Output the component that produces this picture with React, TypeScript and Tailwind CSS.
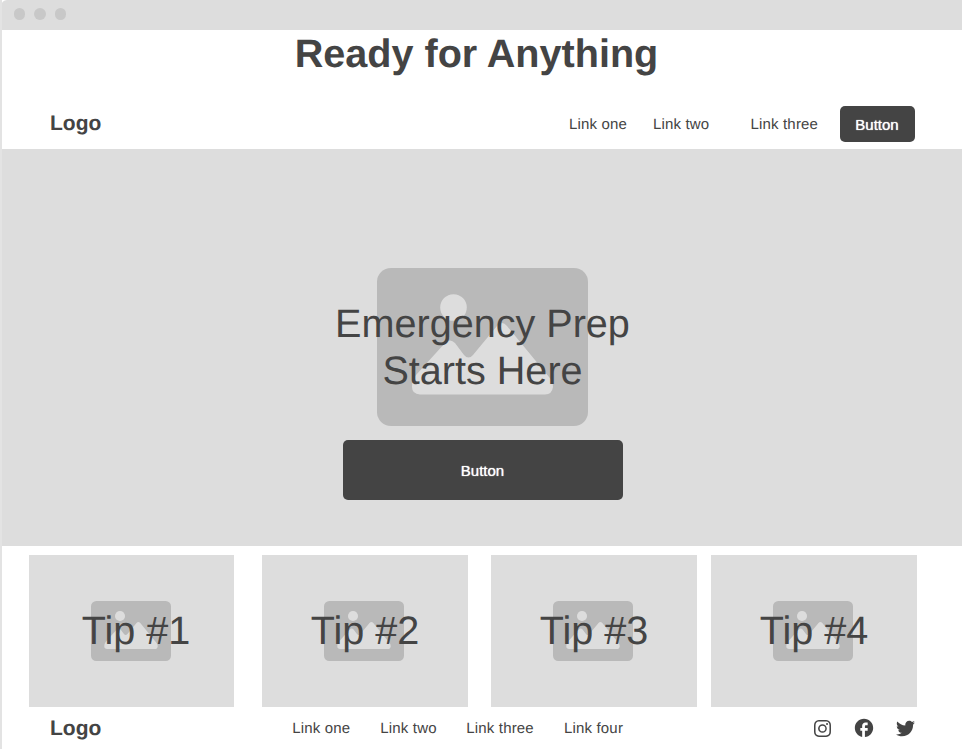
import React from "react";
import { BsInstagram } from "react-icons/bs";
import { FaTwitter } from "react-icons/fa";
import { MdFacebook } from "react-icons/md";

function Placeholder({ className }: { className: string }) {
  return (
    <svg viewBox="0 0 211 158" preserveAspectRatio="none" className={className}>
      <rect width="211" height="158" rx="14" fill="#b9b9b9" />
      <circle cx="76.5" cy="39.5" r="13.3" fill="#ddd" />
      <path
        d="M35 119Q35 112 39 107L68 75Q73 70 78 75L87 87Q91.500 92 96 87L120 58Q125 52 130 58L172 109Q176 113 176 119Q175 126.500 168 126.500H43Q35 126 35 119Z"
        fill="#ddd"
      />
    </svg>
  );
}

function Tip({ n, className, titleClass = "" }: { n: number; className: string; titleClass?: string }) {
  return (
    <article className={`grid h-[152px] shrink-0 bg-[#ddd] ${className}`}>
      <Placeholder className="col-start-1 row-start-1 mt-[46px] ml-[62.4px] h-[60px] w-20" />
      <h3 className={`z-10 col-start-1 row-start-1 mt-[53px] text-center text-[39.6px] leading-[47px] ${titleClass}`}>Tip #{n}</h3>
    </article>
  );
}

export default function App() {
  return (
    <div className="flex h-[749px] w-[962px] flex-col overflow-hidden border-l-2 border-[#e3e3e3] bg-white font-['Liberation_Sans',Arial,sans-serif] text-[#444] antialiased [text-rendering:geometricPrecision]">
      <div className="-ml-px flex h-[30px] shrink-0 items-center gap-[9px] rounded-tl-md bg-[#ddd] pb-[2px] pl-[13px]">
        <span className="h-3 w-[11px] rounded-full bg-[#c8c8c8]" />
        <span className="h-3 w-3 rounded-full bg-[#c8c8c8]" />
        <span className="h-3 w-[11px] rounded-full bg-[#c8c8c8]" />
      </div>
      <h1 className="h-[68px] shrink-0 pt-px pl-[292.700px] text-[39.6px] leading-[47px] font-bold whitespace-nowrap">Ready for Anything</h1>
      <header className="flex h-[51px] shrink-0 items-start pl-12 text-[15px] whitespace-nowrap">
        <div className="mt-[14px] w-[519px] text-[21px] leading-6 font-bold">Logo</div>
        <nav className="mt-[18px] flex leading-[18px] tracking-[0.17px]">
          <a className="w-[84px]">Link one</a>
          <a className="w-[97.500px]">Link two</a>
          <a className="w-[89.500px]">Link three</a>
        </nav>
        <button className="mt-2 h-9 w-[75px] rounded-[5px] bg-[#444] pt-[2px] pr-px text-white [text-shadow:0_0_1px_white]">Button</button>
      </header>
      <main className="grid h-[397px] shrink-0 bg-[#ddd]">
        <Placeholder className="col-start-1 row-start-1 mt-[119px] ml-[375px] h-[158px] w-[211px]" />
        <div className="z-10 col-start-1 row-start-1 flex w-[962px] flex-col items-center pt-[152px]">
          <h2 className="mr-px text-center text-[39.6px] leading-[47px]">Emergency Prep<br />Starts Here</h2>
          <button className="mt-[45px] h-[60px] w-[280px] rounded-[5px] bg-[#444] pt-[2px] pr-px text-[15px] text-white [text-shadow:0_0_1px_white]">Button</button>
        </div>
      </main>
      <section className="mt-[9px] flex shrink-0 pl-[27px]">
        <Tip n={1} className="mr-7 w-[205px]" titleClass="ml-[9px]" />
        <Tip n={2} className="mr-[23px] w-[206px]" />
        <Tip n={3} className="mr-[14px] w-[206px]" />
        <Tip n={4} className="w-[206px]" />
      </section>
      <footer className="flex h-[42px] shrink-0 items-start pl-12 whitespace-nowrap">
        <div className="mt-[10px] w-[242.300px] text-[21px] leading-6 font-bold">Logo</div>
        <nav className="mt-[13px] flex w-[521.700px] text-[15px] leading-[18px] tracking-[0.17px]">
          <a className="w-[88px]">Link one</a>
          <a className="w-[86px]">Link two</a>
          <a className="w-[97.700px]">Link three</a>
          <a>Link four</a>
        </nav>
        <div className="mt-[10px] flex items-center">
          <BsInstagram className="mr-[22px] size-[17px]" />
          <MdFacebook className="mr-[21px] size-[22px]" />
          <FaTwitter className="size-[19px]" />
        </div>
      </footer>
    </div>
  );
}
